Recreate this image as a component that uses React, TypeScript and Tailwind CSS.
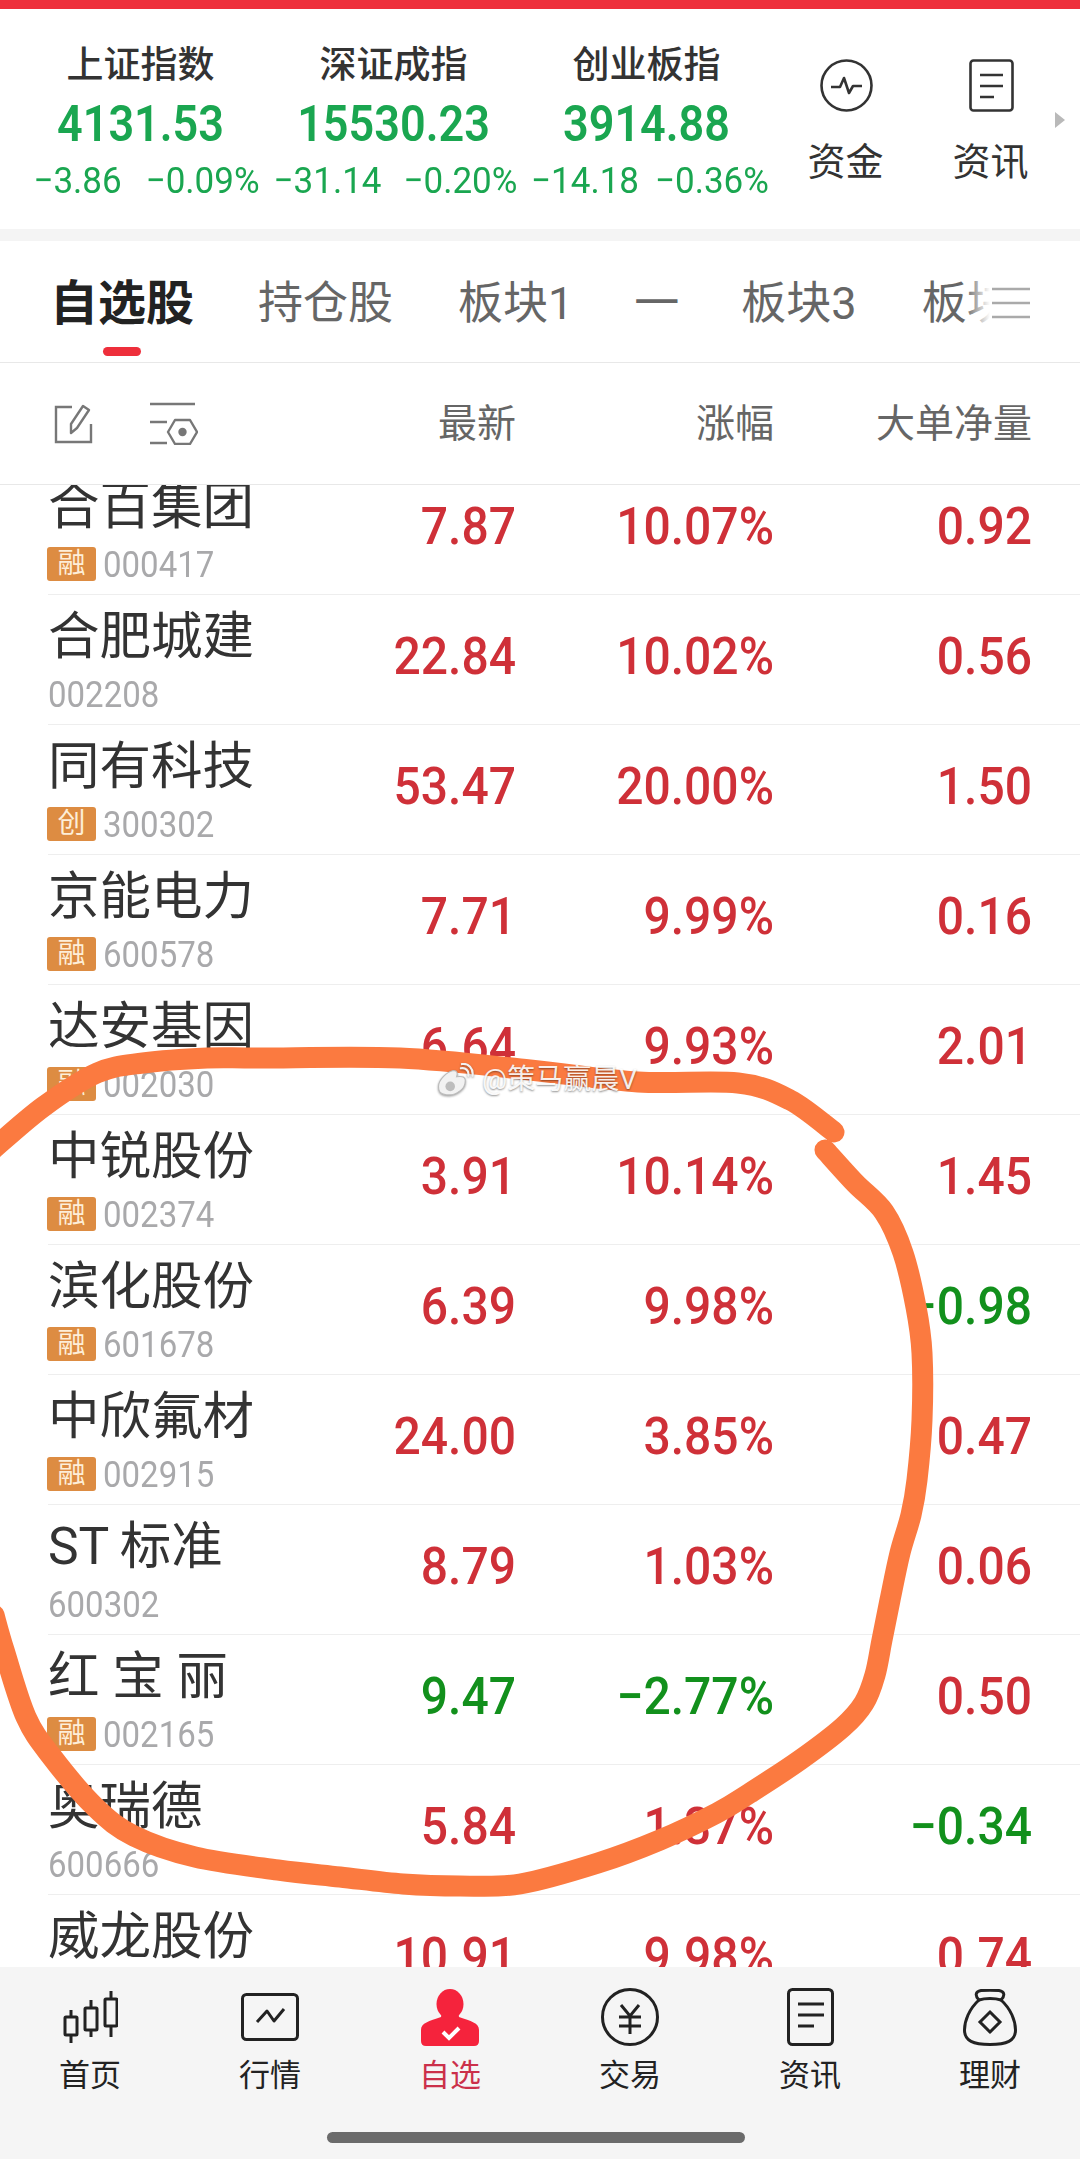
import { ReactNode } from "react"

const RED = "text-[#cf3038]"
const GREEN = "text-[#12901c]"

const indices = [
  { name: "上证指数", value: "4131.53", change: "−3.86", pct: "−0.09%", sub: "gap-[24px] pl-[12px]" },
  { name: "深证成指", value: "15530.23", change: "−31.14", pct: "−0.20%", sub: "gap-[22px] pl-[4px]" },
  { name: "创业板指", value: "3914.88", change: "−14.18", pct: "−0.36%", sub: "gap-[16px] pl-[7px]" },
]

const stocks = [
  { name: "合百集团", code: "000417", tag: "融", price: "7.87", pct: "10.07%", net: "0.92" },
  { name: "合肥城建", code: "002208", tag: "", price: "22.84", pct: "10.02%", net: "0.56" },
  { name: "同有科技", code: "300302", tag: "创", price: "53.47", pct: "20.00%", net: "1.50" },
  { name: "京能电力", code: "600578", tag: "融", price: "7.71", pct: "9.99%", net: "0.16" },
  { name: "达安基因", code: "002030", tag: "融", price: "6.64", pct: "9.93%", net: "2.01" },
  { name: "中锐股份", code: "002374", tag: "融", price: "3.91", pct: "10.14%", net: "1.45" },
  { name: "滨化股份", code: "601678", tag: "融", price: "6.39", pct: "9.98%", net: "−0.98" },
  { name: "中欣氟材", code: "002915", tag: "融", price: "24.00", pct: "3.85%", net: "0.47" },
  { name: "ST\u2009标准", code: "600302", tag: "", price: "8.79", pct: "1.03%", net: "0.06" },
  { name: "红 宝 丽", code: "002165", tag: "融", price: "9.47", pct: "−2.77%", net: "0.50" },
  { name: "奥瑞德", code: "600666", tag: "", price: "5.84", pct: "1.37%", net: "−0.34" },
  { name: "威龙股份", code: "603779", tag: "融", price: "10.91", pct: "9.98%", net: "0.74" },
]

// hand drawn circle, traced off the screenshot
const strokeTop: number[][] = [
  [834, 1132], [790, 1100], [738, 1083], [638, 1082], [530, 1070], [400, 1058], [260, 1058],
  [207, 1058], [143, 1063], [97, 1073], [43, 1107], [-8, 1150],
]
const strokeMain: number[][] = [
  [825, 1150], [855, 1183], [884, 1212], [903, 1253], [916, 1307], [922, 1353], [922, 1420], [917, 1480],
  [911, 1515], [900, 1553], [890, 1600], [882, 1640], [875, 1675], [864, 1703], [843, 1727],
  [800, 1760], [750, 1793], [717, 1813], [660, 1840], [598, 1863], [520, 1884], [460, 1886], [403, 1884],
  [340, 1877], [278, 1870], [195, 1857], [134, 1836], [95, 1807], [52, 1757], [26, 1717], [4, 1650], [-6, 1615],
]

function smooth(p: number[][]) {
  let d = `M${p[0][0]} ${p[0][1]}`
  for (let i = 0; i < p.length - 1; i++) {
    const a = p[Math.max(i - 1, 0)]
    const b = p[i]
    const c = p[i + 1]
    const e = p[Math.min(i + 2, p.length - 1)]
    d += ` C${b[0] + (c[0] - a[0]) / 6} ${b[1] + (c[1] - a[1]) / 6} ${c[0] - (e[0] - b[0]) / 6} ${c[1] - (e[1] - b[1]) / 6} ${c[0]} ${c[1]}`
  }
  return d
}

function Tall({ children, className }: { children: ReactNode; className: string }) {
  return <span className={`inline-block origin-center ${className}`}>{children}</span>
}

function IndexColumn({ item }: { item: (typeof indices)[number] }) {
  return (
    <div className="w-[253px] flex flex-col items-center pt-[35px]">
      <div className="text-[37px] leading-[44px] font-medium text-[#333]">{item.name}</div>
      <div className="mt-[11px] h-[50px] leading-[50px] text-[45px] font-semibold text-[#1aa650]">
        <Tall className="scale-y-[1.1]">{item.value}</Tall>
      </div>
      <div className={`mt-[12px] h-[40px] leading-[40px] text-[35px] text-[#1aa650] flex justify-center whitespace-nowrap ${item.sub}`}>
        <Tall className="scale-y-[1.05]">{item.change}</Tall>
        <Tall className="scale-y-[1.05]">{item.pct}</Tall>
      </div>
    </div>
  )
}

function QuickLink({ icon, label }: { icon: ReactNode; label: string }) {
  return (
    <div className="w-[145px] flex flex-col items-center pt-[50px]">
      <div className="h-[53px] flex items-center">{icon}</div>
      <div className="mt-[31px] text-[38px] leading-[38px] text-[#333]">{label}</div>
    </div>
  )
}

function Row({ s }: { s: (typeof stocks)[number] }) {
  const priceColor = s.pct.startsWith("−") ? GREEN : RED
  const netColor = s.net.startsWith("−") ? GREEN : RED
  return (
    <div className="h-[130px] ml-[48px] border-b border-[#eeeeee] flex items-start">
      <div className="w-[301px] pt-[12px]">
        <div className="text-[51.5px] leading-[60px] text-[#333] whitespace-pre">{s.name}</div>
        <div className="mt-[10px] h-[34px] flex items-center">
          {s.tag && (
            <span className="w-[49px] h-[34px] -ml-[1px] mr-[7px] rounded-[3px] bg-[#dd8c42] text-[#fdeed8] text-[28px] leading-[34px] text-center">
              {s.tag}
            </span>
          )}
          <Tall className="text-[33px] leading-[34px] text-[#a9a9ab] scale-y-[1.14]">{s.code}</Tall>
        </div>
      </div>
      <Value width="w-[167px]" color={priceColor}>{s.price}</Value>
      <Value width="w-[258px]" color={priceColor}>{s.pct}</Value>
      <Value width="w-[258px]" color={netColor}>{s.net}</Value>
    </div>
  )
}

function Value({ width, color, children }: { width: string; color: string; children: ReactNode }) {
  return (
    <div className={`${width} text-right pt-[32px] text-[48px] font-medium leading-[60px] whitespace-nowrap ${color}`}>
      <Tall className="scale-y-[1.08]">{children}</Tall>
    </div>
  )
}

function NavItem({ icon, label, active }: { icon: ReactNode; label: string; active?: boolean }) {
  return (
    <div className="w-[180px] flex flex-col items-center pt-[20px]">
      <div className="h-[60px] flex items-center justify-center">{icon}</div>
      <div className={`mt-[11px] text-[31px] leading-[36px] ${active ? "text-[#cb304a]" : "text-[#222]"}`}>{label}</div>
    </div>
  )
}

export default function App() {
  return (
    <div className="relative w-[1080px] h-[2159px] overflow-hidden bg-white font-['Roboto','Noto_Sans_CJK_SC',sans-serif]">
      <div className="h-[9px] bg-[#ee2f3b]" />

      {/* Index strip */}
      <div className="h-[220px] flex pl-[14px]">
        {indices.map((item) => (
          <IndexColumn key={item.name} item={item} />
        ))}
        <QuickLink
          label="资金"
          icon={
            <svg width="53" height="53" viewBox="0 0 53 53" fill="none" stroke="#333" strokeWidth="2.6" className="ml-[2px]">
              <circle cx="26.5" cy="26.5" r="25" />
              <path d="M11 28h9l4-9 5 15 4-7h9" strokeLinejoin="round" />
            </svg>
          }
        />
        <QuickLink
          label="资讯"
          icon={
            <svg width="45" height="53" viewBox="0 0 45 53" fill="none" stroke="#333" strokeWidth="2.6" className="ml-[2px]">
              <rect x="1.5" y="1.5" width="42" height="50" rx="3" />
              <path d="M11 16h23M11 27h23M11 38h14" />
            </svg>
          }
        />
        <svg width="10" height="16" viewBox="0 0 10 16" className="-ml-[8px] mt-[103px] shrink-0">
          <path d="M0 0l10 8-10 8z" fill="#b9b9b9" />
        </svg>
      </div>
      <div className="h-[12px] bg-[#f4f4f4]" />

      {/* Tabs */}
      <div className="relative h-[122px] border-b border-[#e8e8e8] flex gap-[65px] pl-[50px] overflow-hidden whitespace-nowrap text-[45px] leading-[60px] text-[#666]">
        <div className="relative h-full pt-[33px] -mr-[1px] text-[48px] font-bold text-[#222]">
          自选股
          <span className="absolute left-[53px] top-[106px] w-[38px] h-[9px] rounded-full bg-[#ee2f3b]" />
        </div>
        <div className="pt-[33px]">持仓股</div>
        <div className="pt-[33px]">板块1</div>
        <div className="pt-[33px] w-[41px] -ml-[4px]">一</div>
        <div className="pt-[33px] ml-[1px]">板块3</div>
        <div className="pt-[33px]">板块4</div>
        <div className="absolute right-0 top-0 h-full w-[115px] flex">
          <div className="w-[25px] bg-gradient-to-r from-white/0 to-white" />
          <div className="flex-1 bg-white pt-[46px] pl-[2px]">
            <svg width="38" height="32" viewBox="0 0 38 32" stroke="#aaa" strokeWidth="2.4">
              <path d="M0 2h38M0 16h38M0 30h38" />
            </svg>
          </div>
        </div>
      </div>

      {/* List header */}
      <div className="h-[122px] border-b border-[#e8e8e8] flex items-center pl-[54px] text-[39px] text-[#666]">
        <svg width="39" height="40" viewBox="0 0 39 40" fill="none" stroke="#777" strokeWidth="2.4" className="shrink-0">
          <path d="M18 3H2v35h35V20" />
          <path d="M17 29v-9L29 2l6 4-12 18z" strokeLinejoin="round" />
        </svg>
        <svg width="48" height="43" viewBox="0 0 48 43" fill="none" stroke="#777" strokeWidth="2.4" className="ml-[57px] shrink-0">
          <path d="M0 2h45M0 20h17M0 41h17" />
          <path d="M25 18h15l7 12-7 12H25l-7-12z" strokeLinejoin="round" />
          <circle cx="32.5" cy="30" r="3" fill="#777" />
        </svg>
        <div className="w-[318px] pt-[2px] text-right">最新</div>
        <div className="w-[258px] pt-[2px] text-right">涨幅</div>
        <div className="w-[258px] pt-[2px] text-right">大单净量</div>
      </div>

      {/* Stock list */}
      <div className="h-[1482px] overflow-hidden">
        <div className="-mt-[20px]">
          {stocks.map((s) => (
            <Row key={s.code} s={s} />
          ))}
        </div>
      </div>

      {/* Bottom nav */}
      <div className="h-[192px] bg-[#f5f5f5] flex flex-col">
        <div className="flex">
          <NavItem
            label="首页"
            icon={
              <svg width="56" height="54" viewBox="0 0 56 54" fill="none" stroke="#222" strokeWidth="3">
                <path d="M9 20v33M29 10v37M49 1v46" />
                <rect x="3" y="27" width="12" height="18" rx="1" fill="#f5f5f5" />
                <rect x="23" y="18" width="12" height="22" rx="1" fill="#f5f5f5" />
                <rect x="43" y="9" width="12" height="27" rx="1" fill="#f5f5f5" />
              </svg>
            }
          />
          <NavItem
            label="行情"
            icon={
              <svg width="58" height="48" viewBox="0 0 58 48" fill="none" stroke="#222" strokeWidth="3">
                <rect x="1.5" y="1.5" width="55" height="45" rx="4" />
                <path d="M16 29l10-11 7 10 10-12" strokeLinejoin="round" />
              </svg>
            }
          />
          <NavItem
            active
            label="自选"
            icon={
              <svg width="58" height="57" viewBox="0 0 58 57">
                <ellipse cx="29" cy="15" rx="13.5" ry="15" fill="#f5233c" />
                <path d="M0 52V41c0-7 8-9 20-13l1-6h16l1 6c12 4 20 6 20 13v11q0 5-5 5H5q-5 0-5-5z" fill="#f5233c" />
                <path d="M22 43l6 6 10-10" fill="none" stroke="#fff" strokeWidth="4" />
              </svg>
            }
          />
          <NavItem
            label="交易"
            icon={
              <svg width="58" height="58" viewBox="0 0 58 58" fill="none" stroke="#222" strokeWidth="3">
                <circle cx="29" cy="29" r="27.5" />
                <path d="M20 17l9 11 9-11M18 29h22M18 38h22M29 28v18" />
              </svg>
            }
          />
          <NavItem
            label="资讯"
            icon={
              <svg width="47" height="58" viewBox="0 0 47 58" fill="none" stroke="#222" strokeWidth="3">
                <rect x="1.5" y="1.5" width="44" height="55" rx="4" />
                <path d="M11 16h26M11 27h26M11 38h16" />
              </svg>
            }
          />
          <NavItem
            label="理财"
            icon={
              <svg width="54" height="57" viewBox="0 0 54 57" fill="none" stroke="#222" strokeWidth="3">
                <path d="M16 11C6 20 1.500 32 1.500 41c0 11 9 14.500 25.500 14.500S52.500 52 52.500 41c0-9-4.500-21-14.500-30" />
                <path d="M16 11c-4-4-4-8.500 2-9.500 6-.5 12-.5 18 0 6 1 6 5.500 2 9.500-6-2-16-2-22 0z" strokeLinejoin="round" />
                <path d="M27 23l10 10-10 10-10-10z" />
              </svg>
            }
          />
        </div>
        <div className="mt-[38px] ml-[327px] w-[418px] h-[11px] rounded-full bg-[#6b6b6b]" />
      </div>

      {/* Orange marker scribble over the screenshot */}
      <svg width="1080" height="2159" viewBox="0 0 1080 2159" fill="none" className="absolute left-0 top-0 pointer-events-none">
        <g stroke="#fb7a40" strokeWidth="21" strokeLinecap="round" strokeLinejoin="round">
          <path d={smooth(strokeTop)} />
          <path d={smooth(strokeMain)} />
        </g>
      </svg>

      {/* Weibo watermark */}
      <div className="absolute left-[436px] top-[1063px] flex items-center gap-[8px] text-white/90 text-[28px] leading-[34px] [text-shadow:0_1px_2px_rgba(0,0,0,0.45)]">
        <svg width="38" height="34" viewBox="0 0 35 32" fill="none" className="drop-shadow-[0_1px_1px_rgba(0,0,0,0.4)]">
          <path d="M2 22c0-6 8-14 14-15 4 0 4 3 3 6 5-1 9 0 8 5 0 6-8 12-15 12S2 28 2 22z" fill="#f2f2f2" stroke="#bbb" strokeWidth="1" />
          <circle cx="13" cy="22" r="4.500" fill="#bdbdbd" />
          <path d="M23 5c4-1 8 2 7 7M24 1c6-1 11 4 10 11" stroke="#f2f2f2" strokeWidth="2" strokeLinecap="round" />
        </svg>
        <span className="whitespace-nowrap">@策马赢晨V</span>
      </div>
    </div>
  )
}
